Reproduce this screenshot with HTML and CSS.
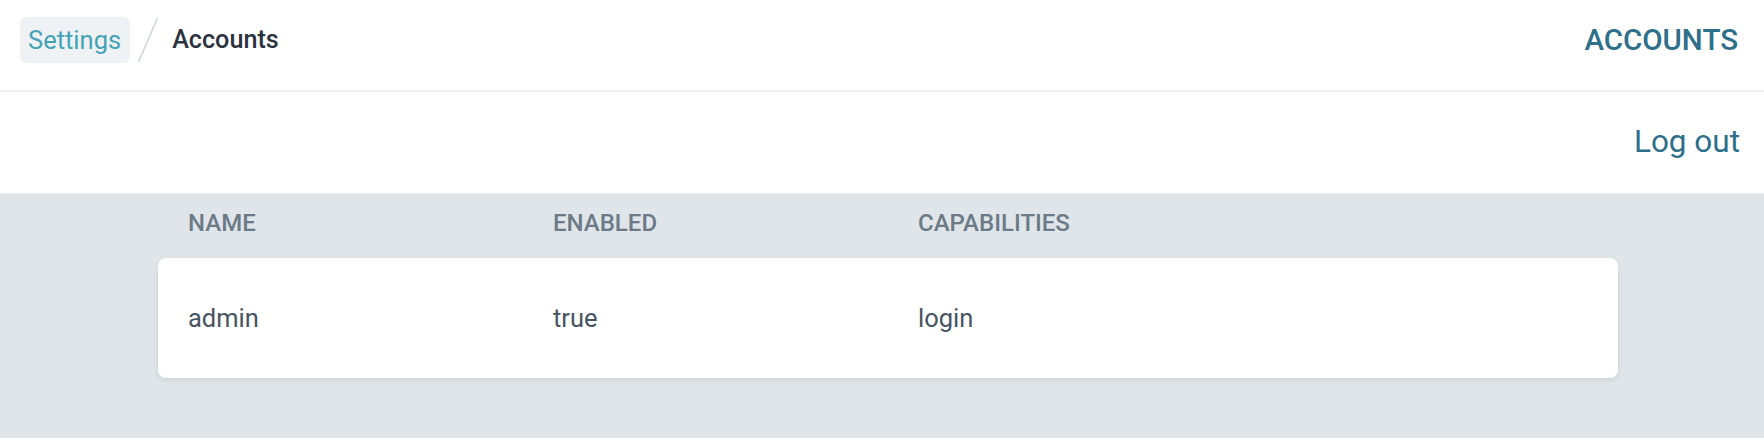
FILE: index.html
```html
<!DOCTYPE html>
<html lang="en">
<head>
    <meta charset="UTF-8">
    <meta name="viewport" content="width=device-width, initial-scale=1.0">
    <title>Accounts</title>
    <link rel="stylesheet" href="styles.css">
</head>
<body>
    <!-- Top bar with breadcrumb -->
    <header class="topbar">
        <nav class="breadcrumb">
            <a class="crumb-link" href="#">Settings</a>
            <svg class="crumb-sep" width="20" height="44" viewBox="0 0 20 44">
                <line x1="19.5" y1="0" x2="0.5" y2="44" stroke="#cfd5dc" stroke-width="1.5"/>
            </svg>
            <span class="crumb-current">Accounts</span>
        </nav>
        <div class="page-title">ACCOUNTS</div>
    </header>

    <div class="userbar">
        <a class="logout" href="#">Log out</a>
    </div>

    <main class="content">
        <div class="table">
            <div class="table-head">
                <div class="cell">NAME</div>
                <div class="cell">ENABLED</div>
                <div class="cell">CAPABILITIES</div>
                <div class="cell"></div>
            </div>
            <div class="table-row">
                <div class="cell">admin</div>
                <div class="cell">true</div>
                <div class="cell">login</div>
                <div class="cell"></div>
            </div>
        </div>
    </main>
</body>
</html>
```

FILE: styles.css
```css
/* General styles */
body {
    font-family: Roboto, "Noto Sans", Arial, sans-serif;
    margin: 0;
    background-color: #dfe5e9;
    min-height: 100vh;
}

a {
    text-decoration: none;
}

/* Top bar */
.topbar {
    display: flex;
    justify-content: space-between;
    align-items: center;
    height: 92px;
    padding: 0 26px 11px 20px;
    box-sizing: border-box;
    background-color: #ffffff;
    border-bottom: 2px solid #eef1f4;
}

.breadcrumb {
    display: flex;
    align-items: center;
}

.crumb-link {
    display: flex;
    align-items: center;
    height: 46px;
    padding: 0 9px 0 8px;
    font-size: 25.5px;
    color: #45a3b3;
    background-color: #eef2f5;
    border-radius: 6px;
}

.crumb-sep {
    display: block;
    margin: 0 14px 0 8px;
}

.crumb-current {
    font-size: 25.2px;
    font-weight: 500;
    color: #2c3340;
}

.page-title {
    font-size: 29.5px;
    font-weight: 500;
    color: #2e6f8a;
}

/* Log out bar */
.userbar {
    display: flex;
    justify-content: flex-end;
    align-items: center;
    height: 102px;
    padding: 0 24px 3px 0;
    box-sizing: border-box;
    background-color: #ffffff;
    border-bottom: 1px solid #e8ecef;
}

.logout {
    font-size: 31.5px;
    color: #2e6f8a;
}

/* Accounts table */
.content {
    padding: 0 146px 40px 158px;
}

.table-head,
.table-row {
    display: grid;
    grid-template-columns: repeat(4, 1fr);
    align-items: center;
}

.table-head {
    height: 64px;
    padding-bottom: 6px;
    box-sizing: border-box;
    font-size: 24px;
    font-weight: 500;
    color: #6c7a88;
}

.table-row {
    height: 120px;
    font-size: 25.5px;
    color: #475462;
    background-color: #ffffff;
    border-radius: 8px;
    box-shadow: 0 2px 5px rgba(60, 80, 100, 0.12);
}

.cell {
    padding-left: 30px;
}
```
